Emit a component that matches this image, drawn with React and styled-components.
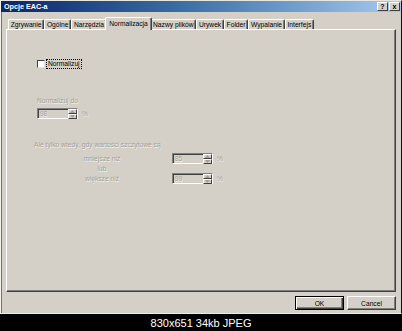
import React from 'react';
import styled, { createGlobalStyle } from 'styled-components';

const GlobalStyle = createGlobalStyle`
  html, body {
    margin: 0;
    padding: 0;
    background: #000;
  }
  body {
    width: 402px;
    height: 331px;
    overflow: hidden;
    font-family: 'Liberation Sans', Arial, sans-serif;
  }
`;

const Dialog = styled.div`
  box-sizing: border-box;
  width: 402px;
  height: 314px;
  background: #d4d0c8;
  border-top: 1px solid #e8e6e0;
  border-left: 1px solid #f2f1ec;
  border-right: 1px solid #111;
  border-bottom: 1px solid #ecebe6;
  box-shadow: inset 1px 0 0 #77746e;
  display: flex;
  flex-direction: column;
`;

const TitleBar = styled.div`
  height: 11px;
  background: linear-gradient(to right, #0a246a 0%, #3a6ea5 45%, #a6caf0 100%);
  display: flex;
  align-items: center;
  padding: 0 1px 0 3px;
`;

const Title = styled.span`
  flex: 1;
  color: #fff;
  font-weight: bold;
  font-size: 7.2px;
  line-height: 11px;
`;

const CaptionButtons = styled.div`
  display: flex;
  gap: 1px;
`;

const CaptionButton = styled.div`
  box-sizing: border-box;
  width: 11px;
  height: 9px;
  background: #d4d0c8;
  border-top: 1px solid #fff;
  border-left: 1px solid #fff;
  border-right: 1px solid #404040;
  border-bottom: 1px solid #404040;
  display: flex;
  align-items: center;
  justify-content: center;
  font-weight: bold;
  font-size: 7px;
  line-height: 7px;
  color: #000;
`;

const TabStrip = styled.div`
  margin-top: 5px;
  height: 12px;
  padding-left: 7px;
  display: flex;
  align-items: flex-end;
`;

const Tab = styled.div`
  position: relative;
  z-index: ${p => (p.$active ? 2 : 1)};
  box-sizing: border-box;
  height: ${p => (p.$active ? '13px' : '10px')};
  margin: ${p => (p.$active ? '0 -2px -1px' : '0')};
  padding: ${p => (p.$active ? '0 3.5px 1px' : '0 1.7px')};
  background: #d4d0c8;
  border-top: 1px solid #fff;
  border-left: 1px solid #fff;
  border-right: 1px solid #404040;
  box-shadow: inset -1px 0 0 #808080;
  border-radius: 2px 2px 0 0;
  display: flex;
  align-items: center;
  font-size: 6.7px;
  white-space: nowrap;
  color: #000;
`;

const Panel = styled.div`
  box-sizing: border-box;
  height: 263px;
  margin: 0 5px;
  border-top: 1px solid #fff;
  border-left: 1px solid #fff;
  border-right: 1px solid #404040;
  border-bottom: 1px solid #404040;
  box-shadow: inset -1px -1px 0 #808080;
  padding: 29px 0 0 30px;
  display: flex;
  flex-direction: column;
  align-items: flex-start;
`;

const CheckRow = styled.div`
  height: 10px;
  display: flex;
  align-items: center;
  gap: 2px;
`;

const CheckBox = styled.div`
  box-sizing: border-box;
  width: 8px;
  height: 8px;
  background: #fff;
  border-top: 1px solid #404040;
  border-left: 1px solid #404040;
  border-right: 1px solid #e4e2dc;
  border-bottom: 1px solid #e4e2dc;
`;

const CheckLabel = styled.span`
  font-size: 6.7px;
  line-height: 8px;
  padding: 0 1px;
  outline: 1px dotted #000;
  color: #000;
`;

const Muted = styled.div`
  margin-top: ${p => p.$top || 0}px;
  margin-left: ${p => p.$left || 0}px;
  font-size: 6.7px;
  line-height: 8px;
  height: 8px;
  color: #a29e96;
  text-shadow: 0.5px 0.5px 0 #f4f3ef;
  white-space: nowrap;
`;

const CenterLabel = styled(Muted)`
  width: 84px;
  text-align: center;
`;

const FieldRow = styled.div`
  margin-top: ${p => p.$top || 0}px;
  margin-left: ${p => p.$left || 0}px;
  display: flex;
  align-items: center;
`;

const RowLabel = styled(CenterLabel)`
  margin-right: 28px;
`;

const SpinBox = styled.div`
  box-sizing: border-box;
  width: 41px;
  height: 11px;
  background: #d4d0c8;
  border-top: 1px solid #808080;
  border-left: 1px solid #808080;
  border-right: 1px solid #fff;
  border-bottom: 1px solid #fff;
  box-shadow: inset 1px 1px 0 #404040;
  display: flex;
  align-items: stretch;
`;

const SpinValue = styled.span`
  flex: 1;
  padding-left: 2px;
  font-size: 6.5px;
  line-height: 9px;
  color: #a29e96;
  text-shadow: 0.5px 0.5px 0 #f4f3ef;
`;

const SpinButtons = styled.div`
  width: 9px;
  display: flex;
  flex-direction: column;
`;

const SpinButton = styled.div`
  box-sizing: border-box;
  flex: 1;
  background: #d4d0c8;
  border-top: 1px solid #fff;
  border-left: 1px solid #fff;
  border-right: 1px solid #404040;
  border-bottom: 1px solid #404040;
  display: flex;
  align-items: center;
  justify-content: center;
`;

const Percent = styled(Muted)`
  margin-left: 4px;
`;

const ButtonRow = styled.div`
  height: 21px;
  box-sizing: border-box;
  padding: 4px 5px 0 0;
  display: flex;
  justify-content: flex-end;
  gap: 3px;
`;

const Button = styled.div`
  box-sizing: border-box;
  width: 49px;
  height: 14px;
  background: #d4d0c8;
  border: 1px solid;
  border-color: ${p => (p.$default ? '#000' : '#fff #404040 #404040 #fff')};
  box-shadow: ${p =>
    p.$default
      ? 'inset 1px 1px 0 #fff, inset -1px -1px 0 #404040, inset -2px -2px 0 #808080'
      : 'inset -1px -1px 0 #808080'};
  display: flex;
  align-items: center;
  justify-content: center;
  font-size: 6.7px;
  color: #000;
`;

const Caption = styled.div`
  height: 17px;
  display: flex;
  align-items: center;
  justify-content: center;
  color: #fff;
  font-size: 11px;
`;

const Arrow = ({ up }) => (
  <svg width="5" height="3" viewBox="0 0 5 3">
    <path d={up ? 'M0 3 L2.5 0 L5 3 Z' : 'M0 0 L2.5 3 L5 0 Z'} fill="#a29e96" />
  </svg>
);

const Spinner = ({ value }) => (
  <SpinBox>
    <SpinValue>{value}</SpinValue>
    <SpinButtons>
      <SpinButton><Arrow up /></SpinButton>
      <SpinButton><Arrow /></SpinButton>
    </SpinButtons>
  </SpinBox>
);

const tabs = ['Zgrywanie', 'Ogólne', 'Narzędzia', 'Normalizacja', 'Nazwy plików', 'Urywek', 'Folder', 'Wypalanie', 'Interfejs'];

export default function App() {
  return (
    <>
      <GlobalStyle />
      <Dialog>
        <TitleBar>
          <Title>Opcje EAC-a</Title>
          <CaptionButtons>
            <CaptionButton>?</CaptionButton>
            <CaptionButton>x</CaptionButton>
          </CaptionButtons>
        </TitleBar>
        <TabStrip>
          {tabs.map(t => (
            <Tab key={t} $active={t === 'Normalizacja'}>{t}</Tab>
          ))}
        </TabStrip>
        <Panel>
          <CheckRow>
            <CheckBox />
            <CheckLabel>Normalizuj</CheckLabel>
          </CheckRow>
          <Muted $top={28}>Normalizuj do</Muted>
          <FieldRow $top={3}>
            <Spinner value="98" />
            <Percent>%</Percent>
          </FieldRow>
          <Muted $top={22} $left={-3}>Ale tylko wtedy, gdy wartości szczytowe są</Muted>
          <FieldRow $top={4} $left={23}>
            <RowLabel>mniejsze niż</RowLabel>
            <Spinner value="85" />
            <Percent>%</Percent>
          </FieldRow>
          <CenterLabel $top={1} $left={23}>lub</CenterLabel>
          <FieldRow $left={23}>
            <RowLabel>większe niż</RowLabel>
            <Spinner value="99" />
            <Percent>%</Percent>
          </FieldRow>
        </Panel>
        <ButtonRow>
          <Button $default>OK</Button>
          <Button>Cancel</Button>
        </ButtonRow>
      </Dialog>
      <Caption>830x651 34kb JPEG</Caption>
    </>
  );
}
